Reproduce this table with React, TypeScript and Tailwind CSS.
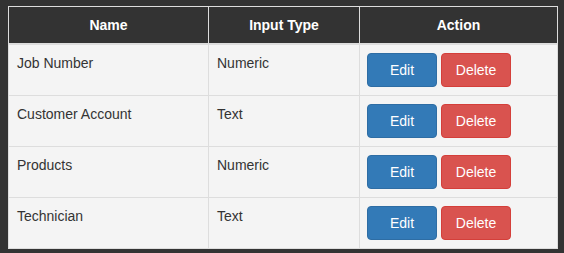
import React from 'react';

type Field = { name: string; inputType: string };

const fields: Field[] = [
  { name: 'Job Number', inputType: 'Numeric' },
  { name: 'Customer Account', inputType: 'Text' },
  { name: 'Products', inputType: 'Numeric' },
  { name: 'Technician', inputType: 'Text' },
];

export default function App() {
  return (
    <div className="min-h-[253px] w-[564px] bg-[#333333] pl-[8px] pt-[6px] font-['Liberation_Sans',Arial,sans-serif] text-[14px] leading-[20px] text-[#333333]">
      <table className="w-[550px] table-fixed border-collapse border border-[#dddddd]">
        <colgroup>
          <col className="w-[200px]" />
          <col className="w-[151px]" />
          <col />
        </colgroup>
        <thead>
          <tr className="bg-[#333333] text-white">
            <th className="border border-b-2 border-[#dddddd] px-2 py-2 text-center font-bold">Name</th>
            <th className="border border-b-2 border-[#dddddd] px-2 py-2 text-center font-bold">Input Type</th>
            <th className="border border-b-2 border-[#dddddd] px-2 py-2 text-center font-bold">Action</th>
          </tr>
        </thead>
        <tbody>
          {fields.map(f => (
            <tr key={f.name} className="bg-[#f4f4f4]">
              <td className="h-[51px] border border-[#dddddd] p-2 align-top">{f.name}</td>
              <td className="border border-[#dddddd] p-2 align-top">{f.inputType}</td>
              <td className="border border-[#dddddd] p-2 align-top">
                <div className="-ml-px flex gap-[4px]">
                  <button className="h-[34px] w-[70px] rounded-[4px] border border-[#2e6da4] bg-[#337ab7] text-white">Edit</button>
                  <button className="h-[34px] w-[70px] rounded-[4px] border border-[#d43f3a] bg-[#d9534f] text-white">Delete</button>
                </div>
              </td>
            </tr>
          ))}
        </tbody>
      </table>
    </div>
  );
}
